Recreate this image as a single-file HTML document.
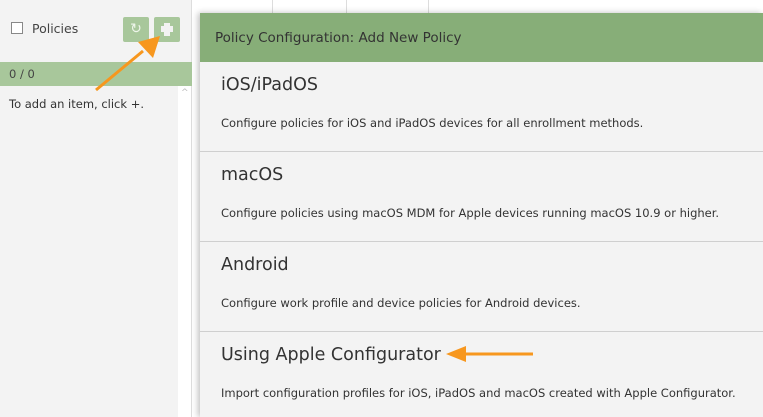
<!DOCTYPE html><html><head><style>
body{margin:0;width:763px;height:417px;overflow:hidden;background:#f7f7f7;font-family:"DejaVu Sans","Liberation Sans",sans-serif;position:relative}
.abs{position:absolute}
.sec{position:absolute;left:0;right:0;border-top:1px solid #cfcfcf}
.sec h2{position:absolute;left:21px;top:13px;margin:0;font-weight:normal;font-size:17.5px;color:#333}
.sec p{position:absolute;left:21px;top:54px;margin:0;font-size:11.5px;color:#333;white-space:nowrap}
</style></head><body>
<div class="abs" style="left:0;top:0;width:192px;height:417px;background:#f3f3f3"></div>
<div class="abs" style="left:178px;top:86px;width:13px;height:331px;background:#fff"></div>
<div class="abs" style="left:181px;top:88px;font-size:9px;color:#bbb">^</div>
<div class="abs" style="left:191px;top:0;width:1px;height:417px;background:#ddd"></div>
<div class="abs" style="left:192px;top:0;width:571px;height:417px;background:#fff"></div>
<div class="abs" style="left:272px;top:0;width:1px;height:14px;background:#ddd"></div>
<div class="abs" style="left:346px;top:0;width:1px;height:14px;background:#ddd"></div>
<div class="abs" style="left:428px;top:0;width:1px;height:14px;background:#ddd"></div>
<div class="abs" style="left:11px;top:22px;width:12px;height:12px;border:1px solid #888;background:#fff;box-sizing:border-box"></div>
<div class="abs" style="left:32px;top:21px;font-size:12.5px;color:#444">Policies</div>
<div class="abs" style="left:123px;top:17px;width:26px;height:25px;background:#a8c79b;border-radius:2px;color:#eef5ea;font-size:14px;text-align:center;line-height:25px">↻</div>
<div class="abs" style="left:154px;top:17px;width:26px;height:25px;background:#a8c79b;border-radius:2px"></div>
<div class="abs" style="left:164px;top:23px;width:6px;height:13px;background:#f2f2f2"></div>
<div class="abs" style="left:161px;top:26px;width:12px;height:6px;background:#f2f2f2"></div>
<div class="abs" style="left:0;top:62px;width:192px;height:24px;background:#a8c79b"></div>
<div class="abs" style="left:9px;top:67px;font-size:11.5px;color:#444">0 / 0</div>
<div class="abs" style="left:9px;top:97px;font-size:11.5px;color:#333">To add an item, click +.</div>
<div class="abs" style="left:200px;top:13px;width:563px;height:404px;background:#f3f3f3;box-shadow:-2px 0 6px rgba(0,0,0,.25)">
<div class="abs" style="left:0;top:0;right:0;height:49px;background:#87ae78"></div>
<div class="abs" style="left:15px;top:17px;font-size:13.5px;color:#333">Policy Configuration: Add New Policy</div>
<div class="sec" style="top:49px;border:0"><h2>iOS/iPadOS</h2><p>Configure policies for iOS and iPadOS devices for all enrollment methods.</p></div>
<div class="sec" style="top:138px"><h2>macOS</h2><p>Configure policies using macOS MDM for Apple devices running macOS 10.9 or higher.</p></div>
<div class="sec" style="top:228px"><h2>Android</h2><p>Configure work profile and device policies for Android devices.</p></div>
<div class="sec" style="top:318px"><h2>Using Apple Configurator</h2><p>Import configuration profiles for iOS, iPadOS and macOS created with Apple Configurator.</p></div>
</div>
<svg class="abs" style="left:0;top:0" width="763" height="417">
<line x1="96" y1="90" x2="143" y2="51" stroke="#f7971e" stroke-width="3"/>
<polygon points="160,36 138,42 153,58" fill="#f7971e"/>
<line x1="463" y1="354" x2="533" y2="354" stroke="#f7971e" stroke-width="3"/>
<polygon points="446,354 466,346 466,362" fill="#f7971e"/>
</svg>
</body></html>
